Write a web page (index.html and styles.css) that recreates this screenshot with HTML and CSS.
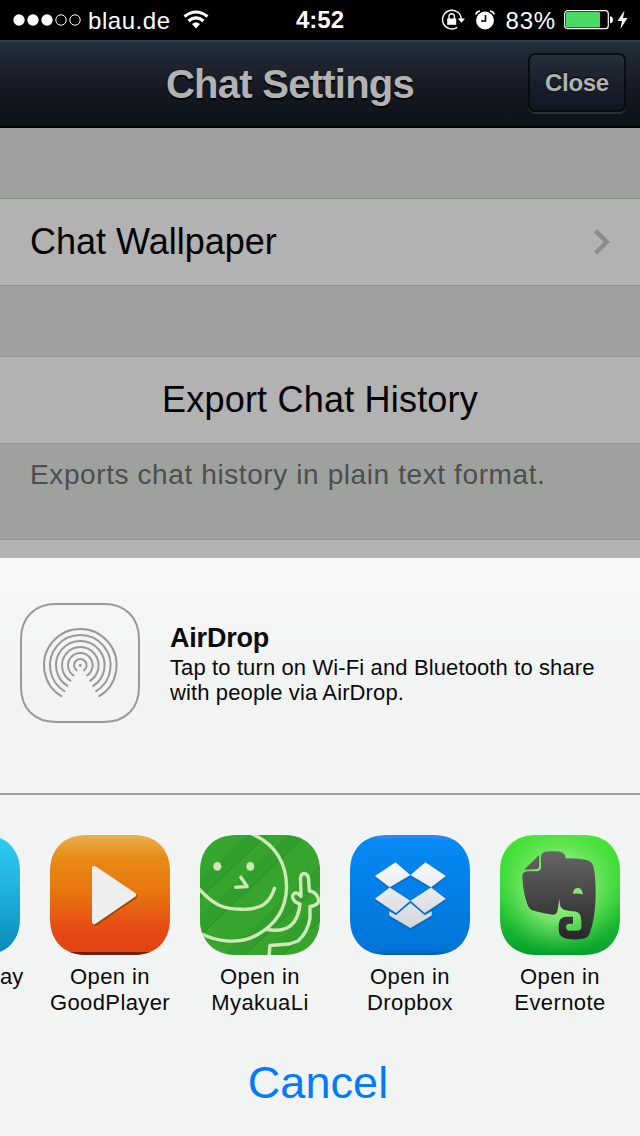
FILE: index.html
```html
<!DOCTYPE html>
<html lang="en">
<head>
<meta charset="utf-8">
<title>Chat Settings</title>
<link rel="stylesheet" href="styles.css">
</head>
<body>
<svg class="defs" width="0" height="0" aria-hidden="true">
  <defs>
    <clipPath id="tile"><path d="M36 0H84C106 0 120 14 120 36V84C120 106 106 120 84 120H36C14 120 0 106 0 84V36C0 14 14 0 36 0Z"/></clipPath>
    <linearGradient id="blue" x2="0" y2="1"><stop stop-color="#2fcbf1"/><stop offset=".5" stop-color="#1fafdb"/><stop offset="1" stop-color="#0889b8"/></linearGradient>
    <linearGradient id="orange" x2="0" y2="1"><stop stop-color="#eaaf4d"/><stop offset=".2" stop-color="#e78a14"/><stop offset=".45" stop-color="#e8780f"/><stop offset=".78" stop-color="#e64c14"/><stop offset="1" stop-color="#e24010"/></linearGradient>
    <linearGradient id="dropblue" x2="0" y2="1"><stop stop-color="#3b87ee"/><stop offset=".05" stop-color="#0589f5"/><stop offset=".5" stop-color="#027fe6"/><stop offset=".96" stop-color="#0274d8"/><stop offset="1" stop-color="#035cae"/></linearGradient>
    <linearGradient id="paper" x2="0" y1="27" y2="93" gradientUnits="userSpaceOnUse"><stop stop-color="#f8f9fa"/><stop offset="1" stop-color="#d3d6d9"/></linearGradient>
    <linearGradient id="lime" x2="0" y2="1"><stop stop-color="#45e335"/><stop offset=".4" stop-color="#3bd83a"/><stop offset="1" stop-color="#04a02c"/></linearGradient>
    <radialGradient id="glow" cx=".5" cy=".45" r=".55"><stop stop-color="#b4f59a"/><stop offset=".5" stop-color="#92ee7d" stop-opacity=".75"/><stop offset="1" stop-color="#60e050" stop-opacity="0"/></radialGradient>
    <linearGradient id="slate" x2="0" y1="16" y2="104" gradientUnits="userSpaceOnUse"><stop stop-color="#666"/><stop offset="1" stop-color="#282828"/></linearGradient>
    <filter id="shade" x="-20%" y="-20%" width="140%" height="140%"><feDropShadow dx="0" dy="1" stdDeviation=".8" flood-color="#003b75" flood-opacity=".55"/></filter>
    <filter id="playshade" x="-20%" y="-20%" width="140%" height="140%"><feDropShadow dx="1" dy="1.5" stdDeviation=".7" flood-color="#703000" flood-opacity=".7"/></filter>
  </defs>
</svg>
<div class="screen">
  <header class="status">
    <div class="carrier">
      <svg width="68" height="14" viewBox="0 0 68 14"><g fill="#fff"><circle cx="6" cy="7" r="5.7"/><circle cx="20" cy="7" r="5.7"/><circle cx="34" cy="7" r="5.7"/></g><g fill="none" stroke="#fff" stroke-width="1"><circle cx="48" cy="7" r="5.2"/><circle cx="62" cy="7" r="5.2"/></g></svg>
      <span class="carrier-name">blau.de</span>
      <svg width="26" height="20" viewBox="0 0 26 20" fill="none" stroke="#fff" stroke-width="3"><path d="M1.5 6.5Q13-2.5 24.5 6.5M5.5 11Q13 4.8 20.5 11"/><path d="M9 14Q13 10.5 17 14L13 18.6Z" fill="#fff" stroke="none"/></svg>
    </div>
    <time class="clock">4:52</time>
    <div class="power">
      <svg class="lock" width="24" height="22" viewBox="0 0 24 22"><path d="M16.2 18.4A9.4 9.4 0 1 1 20.3 10" fill="none" stroke="#fff" stroke-width="1.4"/><path d="M16.8 9.6H24L20.4 13.8Z" fill="#fff"/><path d="M6.2 9.5H15.2V15.8H6.2Z" fill="#fff"/><path d="M8 10V7.5Q8 4.7 10.7 4.7T13.4 7.5V10" fill="none" stroke="#fff" stroke-width="1.4"/></svg>
      <svg class="alarm" width="20" height="20" viewBox="0 0 20 20"><circle cx="10" cy="10.5" r="8.9" fill="#fff"/><path d="M.8 4.5Q1.5 1.5 5 1M19.2 4.5Q18.5 1.5 15 1" fill="none" stroke="#fff" stroke-width="1.6"/><path d="M10.5 5V11H6" fill="none" stroke="#000" stroke-width="1.6"/></svg>
      <span class="percent">83%</span>
      <svg class="battery" width="49" height="20" viewBox="0 0 49 20"><rect x=".7" y=".7" width="43.6" height="18" rx="3" fill="none" stroke="#fff" stroke-width="1.2"/><rect x="2" y="2" width="34" height="15.4" rx="1" fill="#4cd964"/><path d="M46 6.2Q49 6.5 49 9.7T46 13.2Z" fill="#fff"/></svg>
      <svg class="bolt" width="11" height="20" viewBox="0 0 11 20"><path d="M7.5.5.5 11H5L3.3 19 10.5 8H6Z" fill="#fff"/></svg>
    </div>
  </header>
  <nav class="navbar">
    <h1 class="title">Chat Settings</h1>
    <div class="close"><span>Close</span></div>
  </nav>
  <main class="settings">
    <div class="row"><span class="wallpaper">Chat Wallpaper</span>
      <svg width="18" height="26" viewBox="0 0 18 26"><path d="M1.5 1.8 12.8 13 1.5 24.2" fill="none" stroke="#8c8c8f" stroke-width="4.4"/></svg>
    </div>
    <div class="row row-center"><span class="export">Export Chat History</span></div>
    <p class="note">Exports chat history in plain text format.</p>
    <div class="row row-next"></div>
  </main>
  <section class="sheet">
    <div class="airdrop">
      <svg width="120" height="120" viewBox="0 0 120 120" fill="none" stroke="#999" stroke-width="2"><path d="M36 1H84C105.500 1 119 14.500 119 36V84C119 105.500 105.500 119 84 119H36C14.500 119 1 105.500 1 84V36C1 14.500 14.500 1 36 1Z"/><path d="M42.15 93.74A36.3 36.3 0 1 1 78.45 93.74M45.15 88.54A30.3 30.3 0 1 1 75.45 88.54M48.15 83.34A24.3 24.3 0 1 1 72.45 83.34M51.15 78.15A18.3 18.3 0 1 1 69.45 78.15M54.15 72.95A12.3 12.3 0 1 1 66.45 72.95M57.15 67.76A6.3 6.3 0 1 1 63.45 67.76"/><circle cx="60.3" cy="62.3" r="1.5" fill="#999" stroke="none"/></svg>
      <div class="airdrop-text">
        <h2>AirDrop</h2>
        <p><span class="tap">Tap to turn on Wi-Fi and Bluetooth to share</span><br><span class="people">with people via AirDrop.</span></p>
      </div>
    </div>
    <div class="apps">
      <div class="app app-cut">
        <svg width="120" height="120" viewBox="0 0 120 120"><g clip-path="url(#tile)"><rect width="120" height="120" fill="url(#blue)"/></g></svg>
        <div class="label">ay</div>
      </div>
      <div class="app">
        <svg width="120" height="120" viewBox="0 0 120 120"><g clip-path="url(#tile)"><rect width="120" height="120" fill="url(#orange)"/><rect y="117" width="120" height="3" fill="#6c200b"/></g><path d="M44.5 33.5 83.5 59.8 44.5 86.5Z" fill="#eee" stroke="#eee" stroke-width="5" stroke-linejoin="round" filter="url(#playshade)"/></svg>
        <div class="label">Open in<br>GoodPlayer</div>
      </div>
      <div class="app">
        <svg width="120" height="120" viewBox="0 0 120 120"><g clip-path="url(#tile)"><rect width="120" height="120" fill="#37a52d"/><path d="M-10 53 60-12 80-12-10 72ZM-10 90 94-6 112-6-10 110ZM22 122 130 20V40L42 122ZM62 122 130 58V76L80 122Z" fill="#309c2d" opacity=".75"/><path d="M-10 72 80-12M-10 110 112-6M42 122 130 40M80 122 130 76" stroke="#278c26" fill="none"/>
          <g fill="none" stroke="#cde9b5" stroke-width="3.4" stroke-linecap="round" stroke-linejoin="round"><path d="M52-1C76 9 87 30 86.5 53C86 76 73 91 57 100C39 110 16 107-2 97"/><path d="M-1 54C14 70 22 74 41 74.3C61 75 70 68 74.5 53.3"/><path d="M40.8 42.3 47.2 51.6 35.8 52.2"/><path d="M67 94.5C88 98 98 89 100 69C93 67 91.500 62 93.500 59Q97 56 101 61.500L100.500 43Q101 38.500 104.300 38.500Q108 39 108.600 44L109.300 56Q113 56 116.500 60Q121 67 116 69.500Q113 71.500 110 71.500V83Q108 97 98 106L89 109 70 110.500 69 121"/></g><g fill="#cde9b5"><ellipse cx="17.3" cy="31.3" rx="4" ry="4.4"/><ellipse cx="50.3" cy="31.3" rx="4" ry="4.4"/></g></g></svg>
        <div class="label">Open in<br>MyakuaLi</div>
      </div>
      <div class="app">
        <svg width="120" height="120" viewBox="0 0 120 120"><g clip-path="url(#tile)"><rect width="120" height="120" fill="url(#dropblue)"/></g><g fill="url(#paper)" filter="url(#shade)"><path d="M25 41 45.5 27.2 60.3 40 39.7 52.3ZM95.8 41 75.3 27.2 60.5 40 81 52.3ZM39.7 52.6 60.2 65.8 46 78 25 63.7ZM81 52.6 60.6 65.8 74.8 78 95.8 63.7Z"/><path d="M39.3 76.3 46 80.2 60.4 68 74.8 80.2 81.7 76.3V80.5L60.4 93 39.3 80.5Z"/></g></svg>
        <div class="label">Open in<br>Dropbox</div>
      </div>
      <div class="app">
        <svg width="120" height="120" viewBox="0 0 120 120"><g clip-path="url(#tile)"><rect width="120" height="120" fill="url(#lime)"/><rect width="120" height="120" fill="url(#glow)"/></g><path d="M24 34.7 39.2 20V31Q39.2 34 36 34.2Z" fill="url(#slate)"/><path d="M41 22Q41 17 47 16.5Q53 15.8 59 16.6Q65.5 17.5 65.7 23.3Q76 23.2 84 24.6Q92 25.5 93.5 32Q95.8 42 95.7 60Q95.3 82 90.2 97Q88.4 102.6 84 103.5Q76 105 68 104Q59 103 58.7 95V90Q58.5 82 67 81.8H73V88.7H70Q66 88.7 66 92Q66 95.5 70 95.7H78Q81.4 95.5 81.4 91.5Q81.5 83 80.2 80Q79 77.2 75 76.5Q70 76 66 75.2Q60.5 74 60 70L59.3 63.5Q58.8 70 57.3 76Q56.5 80 52.5 79.7Q43 78.5 34 75.8Q29 74.5 27.2 69Q23 57 22.3 42Q22 36.4 28 36.2H37Q41 36 41 32Z" fill="url(#slate)"/><path d="M73 58.8Q73.3 52.8 78 52.8Q82.4 53.2 82.8 59.5Q78 57.8 73 58.8Z" fill="#8ae277"/></svg>
        <div class="label">Open in<br>Evernote</div>
      </div>
    </div>
    <div class="cancel"><span>Cancel</span></div>
  </section>
</div>
</body>
</html>
```
FILE: styles.css
```css
* { box-sizing: border-box; }
body { margin: 0; font-family: "Liberation Sans", Arial, sans-serif; color: #000; }
h1, h2, p { margin: 0; }
svg { display: block; flex: none; }
.defs { height: 0; }
.screen { width: 640px; height: 1136px; overflow: hidden; display: flex; flex-direction: column; background: #9fa19f; }

.status { height: 40px; background: #000; color: #fff; display: grid; grid-template-columns: 1fr auto 1fr; align-items: center; font-size: 24px; line-height: 38px; white-space: nowrap; }
.carrier { display: flex; align-items: center; padding-left: 13px; }
.carrier-name { margin: 1px 12px 0 7px; letter-spacing: .55px; }
.clock { font-weight: bold; padding-top: 0; }
.power { display: flex; align-items: center; justify-content: flex-end; padding-right: 12px; }
.lock { margin-top: -1px; }
.alarm { margin-left: 10px; }
.percent { margin: 1px 8px 0 11px; letter-spacing: .8px; }
.bolt { margin-left: 4px; }

.navbar { height: 88px; display: grid; grid-template-columns: 52px 1fr 112px; align-items: center; border-top: 2px solid #373f48; border-bottom: 2px solid #000; background: linear-gradient(#242e3b 0, #202631 20%, #171b26 50%, #10141c 80%, #0e1219); color: #b2b2b2; text-shadow: 0 2px 1px #000; }
.title { grid-column: 2; text-align: center; font-size: 40px; line-height: 48px; letter-spacing: -.75px; white-space: nowrap; padding-bottom: 0; }
.close { width: 98px; height: 59px; margin-bottom: 3px; border: 2px solid #080c13; border-radius: 7px; background: linear-gradient(#272e3a, #1a202b 50%, #101722); box-shadow: 0 2px 0 #2a313b; display: flex; align-items: center; justify-content: center; font-weight: bold; font-size: 24px; text-shadow: 0 -1px 1px #000; letter-spacing: -.3px; }

.settings { height: 430px; padding-top: 70px; overflow: hidden; }
.row { height: 88px; padding: 0 28px 0 30px; border-top: 1px solid #8f8f8f; border-bottom: 1px solid #8f8f8f; background: #b2b2b2; display: flex; align-items: center; justify-content: space-between; font-size: 36px; }
.row-center { justify-content: center; padding: 0; margin-top: 70px; letter-spacing: .2px; }
.note { height: 95px; padding: 14px 30px; font-size: 28px; line-height: 34px; color: #4c4e52; letter-spacing: .6px; white-space: nowrap; }

.sheet { height: 578px; background: linear-gradient(#f7f7f7, #f2f4f3 20%, #f2f4f3); color: #0b0b0b; }
.airdrop { height: 237px; border-bottom: 2px solid #9b9d9c; display: flex; padding: 45px 0 0 20px; gap: 30px; }
.airdrop-text { padding-top: 19px; white-space: nowrap; }
.airdrop h2 { font-size: 27px; line-height: 32px; letter-spacing: -.2px; }
.airdrop p { font-size: 22px; line-height: 25px; padding-top: 1px; letter-spacing: .12px; }
.apps { height: 235px; padding-top: 40px; margin-left: -100px; display: flex; gap: 30px; }
.app { width: 120px; flex: none; }
.label { width: 150px; margin: 9px -15px 0; text-align: center; font-size: 22px; line-height: 26px; letter-spacing: .4px; white-space: nowrap; }
.app-cut .label { width: auto; margin: 9px -10px 0 100px; text-align: left; letter-spacing: 0; }
.cancel { display: flex; justify-content: center; color: #007aff; font-size: 45px; line-height: 52px; padding: 27px 4px 0 0; letter-spacing: .1px; }
```
